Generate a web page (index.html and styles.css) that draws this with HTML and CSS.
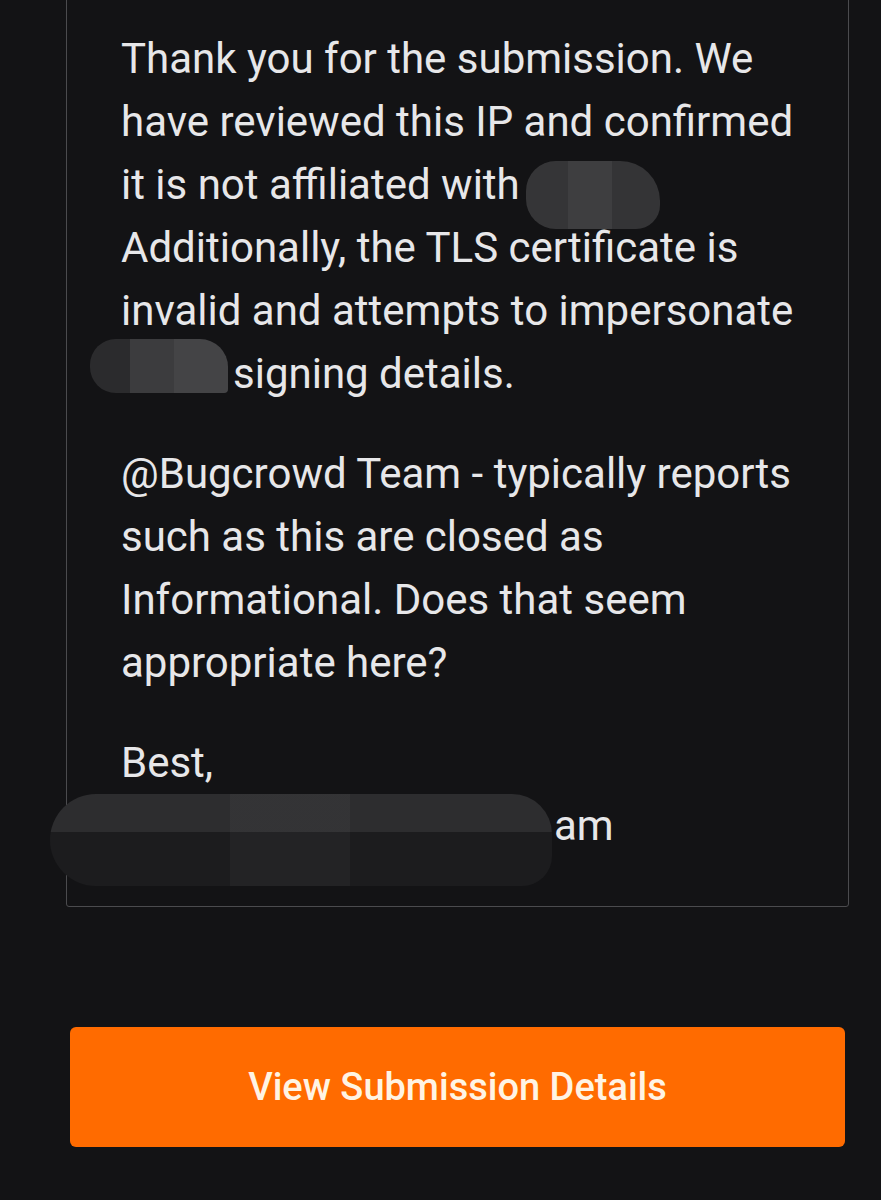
FILE: index.html
```html
<!DOCTYPE html>
<html lang="en">
<head>
  <meta charset="UTF-8">
  <meta name="viewport" content="width=device-width, initial-scale=1.0">
  <title>Submission Comment</title>
  <link rel="stylesheet" href="styles.css">
</head>
<body>
  <div class="page">
    <div class="comment">
      <p>Thank you for the submission. We have reviewed this IP and confirmed it is not affiliated with <span class="redact redact-org"></span> Additionally, the TLS certificate is invalid and attempts to impersonate <span class="redact redact-sign"></span>signing details.</p>
      <p>@Bugcrowd Team - typically reports such as this are closed as Informational. Does that seem appropriate here?</p>
      <p>Best,<br><span class="redact redact-name"></span>am</p>
    </div>

    <a href="#" class="btn">View Submission Details</a>
  </div>
</body>
</html>
```

FILE: styles.css
```css
body {
  margin: 0;
  background-color: #131315;
  font-family: Roboto, "Noto Sans", Arial, sans-serif;
  color: #e7e7e9;
}
.page {
  padding: 0 32px 53px 66px;
}
.comment {
  margin-top: -20px;
  padding: 46px 27px 49px 54px;
  border: 1px solid #4b4b4e;
  border-radius: 0 0 3px 3px;
  font-size: 42px;
  line-height: 63px;
}
.comment p {
  margin: 0 0 37px;
}
.comment p:last-child {
  margin-bottom: 0;
}
.redact {
  display: inline-block;
}
.redact-org {
  width: 134px;
  height: 68px;
  margin: -10px 0 -20px -4px;
  vertical-align: -10px;
  border-radius: 30px 40px 24px 30px;
  background: linear-gradient(90deg, #353537 0 42px, #3e3e40 42px 86px, #343436 86px);
}
.redact-sign {
  width: 138px;
  height: 54px;
  margin: -6px 5px 0 -31px;
  vertical-align: -5px;
  border-radius: 26px 28px 4px 26px;
  background: linear-gradient(90deg, #2b2b2d 0 40px, #3c3c3e 40px 84px, #444446 84px);
}
.redact-name {
  width: 502px;
  height: 92px;
  margin: -10px 2px -40px -71px;
  vertical-align: -6px;
  border-radius: 46px 40px 30px 46px;
  background:
    linear-gradient(90deg, rgba(255,255,255,0) 0 180px, rgba(255,255,255,0.03) 180px 300px, rgba(255,255,255,0) 300px),
    linear-gradient(180deg, #2d2d2f 0 38px, #1c1c1e 38px);
}
.btn {
  display: block;
  margin: 120px 4px 0 4px;
  height: 120px;
  line-height: 120px;
  border-radius: 6px;
  background-color: #ff6b00;
  color: #fff4e4;
  text-align: center;
  text-decoration: none;
  font-size: 38px;
  font-weight: 500;
}
```
